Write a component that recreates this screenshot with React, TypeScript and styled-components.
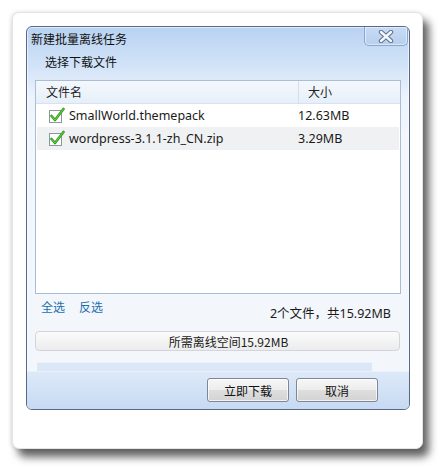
import React from "react";
import styled, { createGlobalStyle } from "styled-components";

const Global = createGlobalStyle`
  html, body { margin: 0; padding: 0; background: #ffffff; }
  body { font-family: "Noto Sans", "Noto Sans CJK SC", sans-serif; font-size: 12px; color: #1b1b1b; }
`;

const Page = styled.div`
  width: 443px;
  height: 469px;
  padding: 12px 0 0 12px;
  box-sizing: border-box;
  background: #fff;
`;

const Frame = styled.div`
  width: 411px;
  height: 437px;
  box-sizing: border-box;
  padding: 13px 0 0 13px;
  background: #fff;
  border: 1px solid #e4e4e4;
  border-radius: 7px;
  box-shadow: 6px 8px 9px rgba(0, 0, 0, 0.62), -1px 0 4px rgba(0, 0, 0, 0.12);
`;

const Dialog = styled.div`
  width: 384px;
  height: 384px;
  box-sizing: border-box;
  border: 1px solid #56698c;
  border-radius: 6px;
  overflow: hidden;
  display: flex;
  flex-direction: column;
  background: linear-gradient(to bottom, #b8d2f1 0px, #d3e4f8 40px, #edf3fb 70px, #f3f6fb 110px, #f3f6fb 100%);
  box-shadow: inset 0 0 0 1px rgba(255, 255, 255, 0.6);
`;

const TitleBar = styled.div`
  height: 22px;
  display: flex;
  align-items: flex-start;
  justify-content: space-between;
`;

const Title = styled.div`
  padding: 4px 0 0 4px;
  font-family: "Noto Sans CJK SC", sans-serif;
  font-size: 12px;
  line-height: 15px;
  color: #111;
`;

const CloseBtn = styled.div`
  width: 44px;
  height: 19px;
  margin-right: 1px;
  box-sizing: border-box;
  border: 1px solid #8aa6cc;
  border-top: none;
  border-radius: 0 0 5px 5px;
  background: linear-gradient(to bottom, #c7dbf3, #b7cfee);
  display: flex;
  align-items: center;
  justify-content: center;
  box-shadow: inset 0 0 0 1px rgba(255, 255, 255, 0.5);
`;

const SubTitle = styled.div`
  height: 31px;
  padding: 5px 0 0 18px;
  box-sizing: border-box;
  font-family: "Noto Sans CJK SC", sans-serif;
  font-size: 12px;
  line-height: 15px;
  color: #111;
`;

const ListBox = styled.div`
  margin: 0 8px;
  width: 366px;
  height: 214px;
  box-sizing: border-box;
  border: 1px solid #a9bdd6;
  background: #fff;
  display: flex;
  flex-direction: column;
`;

const HeaderRow = styled.div`
  height: 22px;
  display: grid;
  grid-template-columns: 263px 1fr;
  background: linear-gradient(to bottom, #f4f8fd, #e6eff9);
  border-bottom: 1px solid #d6e2f0;
`;

const HeaderCell = styled.div<{ $sep?: boolean }>`
  padding-left: ${(p) => (p.$sep ? "9px" : "10px")};
  font-family: "Noto Sans CJK SC", sans-serif;
  font-size: 12px;
  line-height: 21px;
  color: #222;
  border-right: ${(p) => (p.$sep ? "none" : "1px solid #d3deeb")};
`;

const Row = styled.div<{ $alt?: boolean }>`
  height: 23px;
  margin: 0 1px;
  display: grid;
  grid-template-columns: 261px 1fr;
  align-items: center;
  background: ${(p) => (p.$alt ? "#f0f1f3" : "#fff")};
`;

const NameCell = styled.div`
  display: flex;
  align-items: center;
  padding-left: 11px;
  gap: 4px;
  font-family: "Noto Sans", sans-serif;
  font-size: 12.5px;
  color: #1a1a1a;
`;

const SizeCell = styled.div`
  font-family: "Noto Sans", sans-serif;
  font-size: 12.5px;
  color: #1a1a1a;
`;

const InfoRow = styled.div`
  height: 37px;
  padding: 5px 18px 0 14px;
  box-sizing: border-box;
  display: flex;
  justify-content: space-between;
  align-items: flex-start;
`;

const Links = styled.div`
  display: flex;
  gap: 14px;
`;

const Link = styled.span`
  font-family: "Noto Sans CJK SC", sans-serif;
  font-size: 12px;
  color: #1b6fae;
  line-height: 15px;
`;

const Summary = styled.div`
  padding-top: 7px;
  font-family: "Noto Sans", "Noto Sans CJK SC", sans-serif;
  font-size: 12.5px;
  line-height: 15px;
  color: #1a1a1a;
`;

const SpaceBar = styled.div`
  margin: 0 8px;
  width: 365px;
  height: 20px;
  box-sizing: border-box;
  padding-left: 22px;
  border: 1px solid #d2d6dc;
  border-radius: 4px;
  background: linear-gradient(to bottom, #fbfbfb, #ececec);
  display: flex;
  align-items: center;
  justify-content: center;
  font-family: "Noto Sans CJK SC", "Noto Sans", sans-serif;
  font-size: 12px;
  color: #1a1a1a;
`;

const Strip = styled.div`
  margin: 10px 0 0 10px;
  width: 335px;
  height: 10px;
  background: linear-gradient(to bottom, #f5f8fc 0, #f5f8fc 1px, #dce8f7 2px, #dbe7f7 100%);
`;

const Footer = styled.div`
  flex: 1;
  display: flex;
  justify-content: flex-end;
  align-items: flex-start;
  gap: 7px;
  padding: 6px 31px 0 0;
  background: linear-gradient(to bottom, #dde9f8, #c7daf2);
  border-top: 1px solid #e8f0fa;
`;

const Button = styled.div`
  width: 82px;
  height: 24px;
  box-sizing: border-box;
  border: 1px solid #7d8796;
  border-radius: 3px;
  background: linear-gradient(to bottom, #f7f7f7 0%, #ececec 50%, #dedede 51%, #d3d3d3 100%);
  box-shadow: inset 0 0 0 1px rgba(255, 255, 255, 0.7);
  display: flex;
  align-items: center;
  justify-content: center;
  font-family: "Noto Sans CJK SC", sans-serif;
  font-size: 12px;
  color: #111;
`;

const CloseIcon = () => (
  <svg width="18" height="13" viewBox="0 0 18 13">
    <path d="M4 2 L14 11 M14 2 L4 11" stroke="#5d708d" strokeWidth="4.4" strokeLinecap="round" />
    <path d="M4 2 L14 11 M14 2 L4 11" stroke="#f4f8fd" strokeWidth="2.4" strokeLinecap="round" />
  </svg>
);

const Check = () => (
  <svg width="17" height="17" viewBox="0 0 17 17">
    <rect x="1.5" y="3.5" width="12" height="12" fill="#fff" stroke="#8e959c" />
    <path d="M3.5 9 L7 13 L15.5 2" fill="none" stroke="#2f9b1f" strokeWidth="2.6" strokeLinecap="round" strokeLinejoin="round" />
    <path d="M3.5 9 L7 13 L15.5 2" fill="none" stroke="#6fd04a" strokeWidth="1" strokeLinecap="round" strokeLinejoin="round" />
  </svg>
);

const files = [
  { name: "SmallWorld.themepack", size: "12.63MB" },
  { name: "wordpress-3.1.1-zh_CN.zip", size: "3.29MB" },
];

export default function App() {
  return (
    <>
      <Global />
      <Page>
        <Frame>
          <Dialog>
            <TitleBar>
              <Title>新建批量离线任务</Title>
              <CloseBtn>
                <CloseIcon />
              </CloseBtn>
            </TitleBar>
            <SubTitle>选择下载文件</SubTitle>
            <ListBox>
              <HeaderRow>
                <HeaderCell>文件名</HeaderCell>
                <HeaderCell $sep>大小</HeaderCell>
              </HeaderRow>
              {files.map((f, i) => (
                <Row key={f.name} $alt={i % 2 === 1}>
                  <NameCell>
                    <Check />
                    {f.name}
                  </NameCell>
                  <SizeCell>{f.size}</SizeCell>
                </Row>
              ))}
            </ListBox>
            <InfoRow>
              <Links>
                <Link>全选</Link>
                <Link>反选</Link>
              </Links>
              <Summary>2个文件，共15.92MB</Summary>
            </InfoRow>
            <SpaceBar>所需离线空间15.92MB</SpaceBar>
            <Strip />
            <Footer>
              <Button>立即下载</Button>
              <Button>取消</Button>
            </Footer>
          </Dialog>
        </Frame>
      </Page>
    </>
  );
}
